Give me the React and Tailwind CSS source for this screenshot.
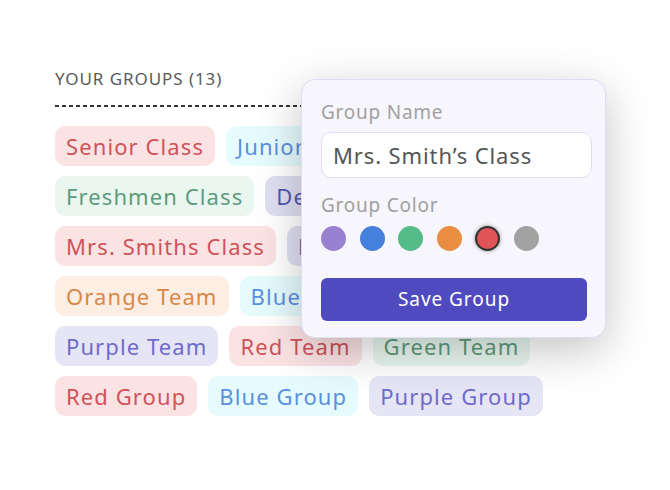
const rows = [
  [
    { name: 'Senior Class', color: 'red' },
    { name: 'Junior Class', color: 'blue' },
  ],
  [
    { name: 'Freshmen Class', color: 'green' },
    { name: 'Debate', color: 'indigo' },
  ],
  [
    { name: 'Mrs. Smiths Class', color: 'red' },
    { name: 'Math', color: 'indigo' },
  ],
  [
    { name: 'Orange Team', color: 'orange' },
    { name: 'Blue Team', color: 'blue' },
  ],
  [
    { name: 'Purple Team', color: 'purple' },
    { name: 'Red Team', color: 'red' },
    { name: 'Green Team', color: 'green' },
  ],
  [
    { name: 'Red Group', color: 'red' },
    { name: 'Blue Group', color: 'blue' },
    { name: 'Purple Group', color: 'purple' },
  ],
];

const tagStyles = {
  red: 'bg-[#fbe3e4] text-[#cf5358]',
  blue: 'bg-[#e6fbfe] text-[#5b8fe0]',
  green: 'bg-[#e9f7f0] text-[#5f9a7c]',
  orange: 'bg-[#fdeee3] text-[#d9874a]',
  purple: 'bg-[#e6e5f5] text-[#6e6bcc]',
  indigo: 'bg-[#e0dff2] text-[#5553b0]',
};

const swatches = [
  { hex: 'bg-[#9a80d0]' },
  { hex: 'bg-[#4580dc]' },
  { hex: 'bg-[#55bb88]' },
  { hex: 'bg-[#e98d41]' },
  { hex: 'bg-[#e05458]', selected: true },
  { hex: 'bg-[#a2a2a2]' },
];

function Tag({ name, color }) {
  return (
    <div className={`shrink-0 h-10 pl-[11px] pr-[11px] rounded-[10px] flex items-center text-[22px] tracking-[0.05em] whitespace-nowrap ${tagStyles[color]}`}>
      {name}
    </div>
  );
}

export default function App() {
  return (
    <div className="relative w-[670px] h-[490px] bg-white overflow-hidden" style={{ fontFamily: '"Noto Sans", Lato, sans-serif' }}>
      <div className="pl-[55px] pt-[67px]">
        <h2 className="text-[17px] leading-6 tracking-[0.055em] text-[#5a5a5a]">YOUR GROUPS (13)</h2>
        <div className="mt-[14px] h-[2px] w-[520px] bg-[repeating-linear-gradient(90deg,#333_0_4px,transparent_4px_7px)]"></div>
        <div className="mt-[19px] flex flex-col gap-[10px]">
          {rows.map((row, i) => (
            <div key={i} className="flex gap-[11px]">
              {row.map(tag => (
                <Tag key={tag.name} {...tag} />
              ))}
            </div>
          ))}
        </div>
      </div>

      <div className="absolute left-[301px] top-[79px] w-[305px] h-[259px] rounded-[14px] border border-[#dfddf2] bg-[#f7f6fc] shadow-[0_12px_45px_rgba(0,0,0,0.24)] pl-[19px] pt-[20px]">
        <label className="block text-[19px] leading-6 tracking-[0.04em] text-[#a0a0a0]">Group Name</label>
        <div className="mt-[8px] w-[271px] h-[46px] rounded-[10px] border border-[#e0def4] bg-white flex items-center px-[11px] text-[22px] tracking-[0.04em] text-[#555]">
          Mrs. Smith’s Class
        </div>
        <label className="block mt-[15px] text-[19px] leading-6 tracking-[0.04em] text-[#a0a0a0]">Group Color</label>
        <div className="mt-[9px] flex gap-[13.5px]">
          {swatches.map((s, i) => (
            <div
              key={i}
              className={`w-[25px] h-[25px] rounded-full ${s.hex} ${s.selected ? 'border-2 border-[#333] shadow-[0_0_4px_rgba(0,0,0,0.4)]' : ''}`}
            ></div>
          ))}
        </div>
        <button className="mt-[27px] w-[266px] h-[43px] rounded-[6px] bg-[#4f4bbe] text-white text-[19px] tracking-[0.05em]">
          Save Group
        </button>
      </div>
    </div>
  );
}
